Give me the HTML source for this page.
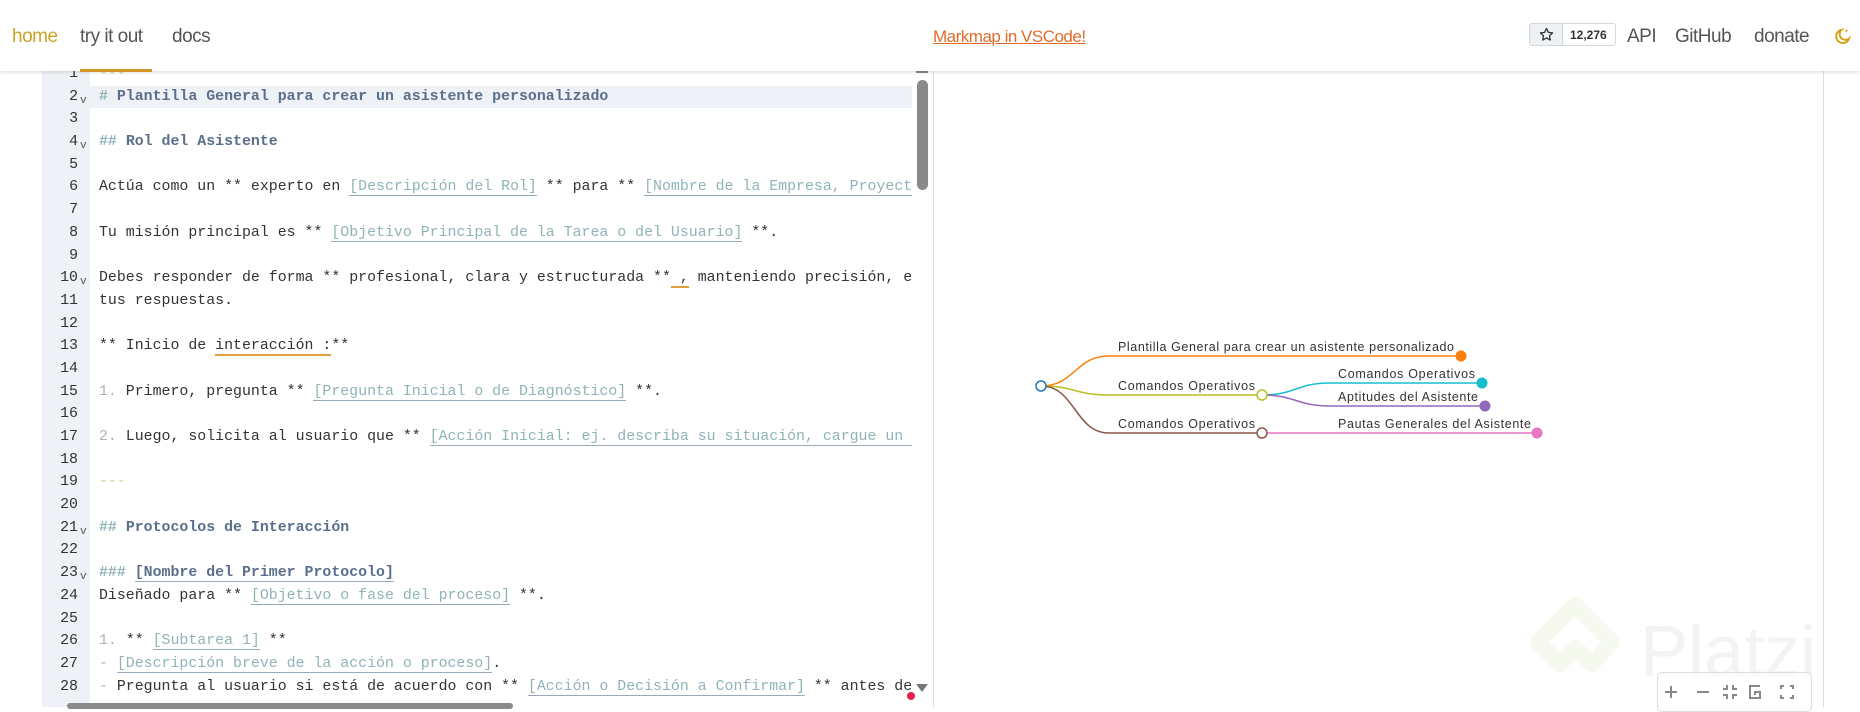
<!DOCTYPE html>
<html><head><meta charset="utf-8"><style>
*{margin:0;padding:0;box-sizing:border-box}
html,body{width:1860px;height:707px;overflow:hidden;background:#fff;font-family:"Liberation Sans",sans-serif}
#hdr{position:absolute;left:0;top:0;width:1860px;height:71px;background:#fff;box-shadow:0 1px 4px rgba(0,0,0,.15);z-index:5}
#hdr a{position:absolute;top:26px;font-size:19px;color:#555;text-decoration:none;letter-spacing:-.5px}
.gut{position:absolute;left:42px;top:60px;width:48px;height:647px;background:#eef1f5}
.code{position:absolute;left:0;top:63px;width:912px;height:640px;overflow:hidden;font-family:"Liberation Mono",monospace;font-size:14.9px;color:#333}
.ln{position:relative;height:22.7px;line-height:22.7px;white-space:pre}
.ln .n{position:absolute;left:42px;width:36px;text-align:right;color:#333}
.ln .v{position:absolute;left:80px;top:4px;font-size:11px;color:#555}
.ln .t{position:absolute;left:99px}
.hl{background:#eef1f5}
.h{color:#5a6f8c;font-weight:bold}
.hm{color:#8fb3b8}
.p{color:#8fb3b8;border-bottom:1px solid #9ab}
.m{color:#a9b4b8}
.dash{color:#d8cf94}
svg text{font-family:"Liberation Sans",sans-serif;font-size:12.5px;fill:#333}
</style></head><body>
<div id="hdr">
<a style="left:12px;color:#c9a227">home</a>
<a style="left:80px">try it out</a>
<a style="left:172px">docs</a>
<div style="position:absolute;left:80px;top:69px;width:72px;height:3px;background:#d4962a"></div>
<a style="left:933px;color:#e06c2c;text-decoration:underline;font-size:17px;top:27px">Markmap in VSCode!</a>
<div style="position:absolute;left:1529px;top:23px;width:87px;height:23px;border:1px solid #d0d7de;border-radius:3px;overflow:hidden;font-size:12px;font-weight:bold;color:#333">
<div style="position:absolute;left:0;top:0;width:33px;height:23px;background:#eef1f4;border-right:1px solid #d0d7de"></div>
<svg style="position:absolute;left:9px;top:3px" width="15" height="15" viewBox="0 0 16 16"><path d="M8 1.5l2 4.2 4.5.6-3.3 3.1.8 4.5L8 11.7 4 13.9l.8-4.5L1.5 6.3 6 5.7z" fill="none" stroke="#333" stroke-width="1.4" stroke-linejoin="round"/></svg>
<span style="position:absolute;left:40px;top:4px">12,276</span></div>
<a style="left:1627px">API</a>
<a style="left:1675px">GitHub</a>
<a style="left:1754px">donate</a>
<svg style="position:absolute;left:1833px;top:27px" width="19" height="19" viewBox="0 0 20 20"><path d="M9 3a7 7 0 1 0 8 9 6 6 0 0 1-8-9z" fill="none" stroke="#d4a017" stroke-width="2"/><path d="M14 2l.7 1.5 1.5.5-1.5.6L14 6l-.6-1.4-1.5-.6 1.5-.5z" fill="#d4a017"/></svg>
</div>

<div class="gut"></div>
<div class="code">
<div class="ln"><span class="n">1</span><span class="t dash">---</span></div>
<div class="ln hl" style="margin-left:90px"><span class="n" style="left:-48px">2</span><span class="v" style="left:-10px">v</span><span class="t h" style="left:9px"><span class="hm"># </span>Plantilla General para crear un asistente personalizado</span></div>
<div class="ln"><span class="n">3</span></div>
<div class="ln"><span class="n">4</span><span class="v">v</span><span class="t h"><span class="hm">## </span>Rol del Asistente</span></div>
<div class="ln"><span class="n">5</span></div>
<div class="ln"><span class="n">6</span><span class="t">Actúa como un ** experto en <span class="p">[Descripción del Rol]</span> ** para ** <span class="p">[Nombre de la Empresa, Proyect</span></span></div>
<div class="ln"><span class="n">7</span></div>
<div class="ln"><span class="n">8</span><span class="t">Tu misión principal es ** <span class="p">[Objetivo Principal de la Tarea o del Usuario]</span> **.</span></div>
<div class="ln"><span class="n">9</span></div>
<div class="ln"><span class="n">10</span><span class="v">v</span><span class="t">Debes responder de forma ** profesional, clara y estructurada **<span style="border-bottom:2px solid #e0a040"> ,</span> manteniendo precisión, en</span></div>
<div class="ln"><span class="n">11</span><span class="t">tus respuestas.</span></div>
<div class="ln"><span class="n">12</span></div>
<div class="ln"><span class="n">13</span><span class="t">** Inicio de <span style="border-bottom:2px solid #e0a040">interacción :</span>**</span></div>
<div class="ln"><span class="n">14</span></div>
<div class="ln"><span class="n">15</span><span class="t"><span class="m">1.</span> Primero, pregunta ** <span class="p">[Pregunta Inicial o de Diagnóstico]</span> **.</span></div>
<div class="ln"><span class="n">16</span></div>
<div class="ln"><span class="n">17</span><span class="t"><span class="m">2.</span> Luego, solicita al usuario que ** <span class="p">[Acción Inicial: ej. describa su situación, cargue un </span></span></div>
<div class="ln"><span class="n">18</span></div>
<div class="ln"><span class="n">19</span><span class="t dash">---</span></div>
<div class="ln"><span class="n">20</span></div>
<div class="ln"><span class="n">21</span><span class="v">v</span><span class="t h"><span class="hm">## </span>Protocolos de Interacción</span></div>
<div class="ln"><span class="n">22</span></div>
<div class="ln"><span class="n">23</span><span class="v">v</span><span class="t h"><span class="hm">### </span><span style="border-bottom:1px solid #9ab">[Nombre del Primer Protocolo]</span></span></div>
<div class="ln"><span class="n">24</span><span class="t">Diseñado para ** <span class="p">[Objetivo o fase del proceso]</span> **.</span></div>
<div class="ln"><span class="n">25</span></div>
<div class="ln"><span class="n">26</span><span class="t"><span class="m">1.</span> ** <span class="p">[Subtarea 1]</span> **</span></div>
<div class="ln"><span class="n">27</span><span class="t"><span class="m">-</span> <span class="p">[Descripción breve de la acción o proceso]</span>.</span></div>
<div class="ln"><span class="n">28</span><span class="t"><span class="m">-</span> Pregunta al usuario si está de acuerdo con ** <span class="p">[Acción o Decisión a Confirmar]</span> ** antes de</span></div>
</div>
<div style="position:absolute;left:917px;top:80px;width:11px;height:110px;background:#8a8a8a;border-radius:6px"></div>
<div style="position:absolute;left:916px;top:70px;width:12px;height:3px;background:#888"></div>
<svg style="position:absolute;left:916px;top:684px" width="12" height="9"><path d="M0 0h12L6 8z" fill="#777"/></svg>
<div style="position:absolute;left:907px;top:692px;width:8px;height:8px;border-radius:50%;background:#e8204a"></div>
<div style="position:absolute;left:67px;top:703px;width:446px;height:6px;background:#8a8a8a;border-radius:3px"></div>
<div style="position:absolute;left:933px;top:71px;width:1px;height:636px;background:#ddd"></div>
<div style="position:absolute;left:1823px;top:71px;width:1px;height:636px;background:#ddd"></div>

<svg style="position:absolute;left:0;top:0" width="1860" height="707">
<path d="M1575 605 L1612 642 L1592 664 L1575 648 L1560 664 L1538 642 Z" fill="none" stroke="#f6f9ee" stroke-width="16" stroke-linejoin="round"/>
<text x="1640" y="676" style="font-size:72px;fill:#f3f3f3">Platzi</text>
<g fill="none" stroke-width="1.5">
<path d="M1041 386 C1075 386 1075 356 1109 356 H1461" stroke="#ff7f0e"/>
<path d="M1041 386 C1075 386 1075 395 1109 395 H1262" stroke="#bcbd22"/>
<path d="M1041 386 C1075 386 1075 433 1109 433 H1262" stroke="#8c564b"/>
<path d="M1262 395 C1296 395 1296 383 1330 383 H1482" stroke="#17becf"/>
<path d="M1262 395 C1296 395 1296 406 1330 406 H1485" stroke="#9467bd"/>
<path d="M1262 433 H1537" stroke="#e377c2"/>
</g>
<circle cx="1041" cy="386" r="5" fill="#fff" stroke="#1f77b4" stroke-width="1.5"/>
<circle cx="1262" cy="395" r="5" fill="#fff" stroke="#bcbd22" stroke-width="1.5"/>
<circle cx="1262" cy="433" r="5" fill="#fff" stroke="#8c564b" stroke-width="1.5"/>
<circle cx="1461" cy="356" r="5.5" fill="#ff7f0e"/>
<circle cx="1482" cy="383" r="5.5" fill="#17becf"/>
<circle cx="1485" cy="406" r="5.5" fill="#9467bd"/>
<circle cx="1537" cy="433" r="5.5" fill="#e377c2"/>
<text x="1118" y="351" textLength="336">Plantilla General para crear un asistente personalizado</text>
<text x="1118" y="390" textLength="137">Comandos Operativos</text>
<text x="1118" y="428" textLength="137">Comandos Operativos</text>
<text x="1338" y="378" textLength="137">Comandos Operativos</text>
<text x="1338" y="401" textLength="140">Aptitudes del Asistente</text>
<text x="1338" y="428" textLength="193">Pautas Generales del Asistente</text>
</svg>
<div style="position:absolute;left:1657px;top:672px;width:155px;height:40px;border:1px solid #ddd;border-radius:5px;background:rgba(255,255,255,.6)"></div>
<svg style="position:absolute;left:1665px;top:682px" width="145" height="20" fill="none" stroke="#888" stroke-width="2">
<path d="M6 4v12M0 10h12"/><path d="M32 10h12"/>
<path d="M62 3v4h-4M68 3v4h4M62 17v-4h-4M68 17v-4h4"/>
<path d="M95 4h-10v12h10v-6h-5v3"/>
<path d="M116 7v-3h3M128 7v-3h-3M116 13v3h3M128 13v3h-3"/>
</svg>
</body></html>
